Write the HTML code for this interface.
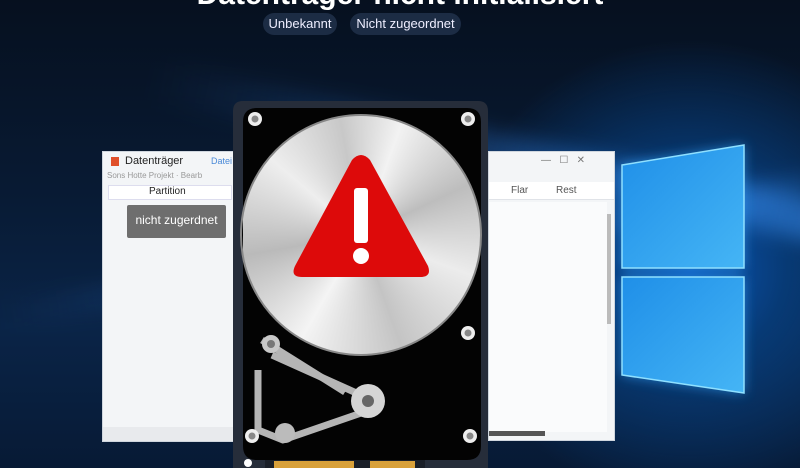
<!DOCTYPE html>
<html><head><meta charset="utf-8"><style>
*{margin:0;padding:0;box-sizing:border-box}
body{width:800px;height:468px;overflow:hidden;position:relative;font-family:"Liberation Sans",sans-serif;
background:radial-gradient(ellipse 240px 230px at 690px 270px,#0b55b5 0%,#073a75 40%,rgba(5,20,45,0) 100%),
linear-gradient(180deg,#06101f 0%,#081a33 40%,#0a2447 70%,#071a35 100%);}
.beam{position:absolute;transform-origin:left center}
.title{position:absolute;left:0;width:800px;top:-22px;text-align:center;color:#fff;font-weight:bold;font-size:30px}
.pill{position:absolute;top:13px;height:22px;border-radius:11px;background:#1c2c44;color:#eef;font-size:13px;line-height:22px;text-align:center}
.win{position:absolute;background:#f3f5f7;border:1px solid #cfd6de}
</style></head><body>
<div class="beam" style="left:0;top:300px;width:820px;height:30px;background:linear-gradient(90deg,rgba(40,110,200,0),rgba(50,130,230,.35),rgba(60,150,255,.15));transform:rotate(-9deg);filter:blur(8px)"></div>
<div class="beam" style="left:150px;top:60px;width:700px;height:40px;background:linear-gradient(90deg,rgba(40,110,200,0),rgba(50,130,230,.3),rgba(60,150,255,.5));transform:rotate(12deg);filter:blur(10px)"></div>
<div class="title">Datenträger nicht initialisiert</div>
<div class="pill" style="left:263px;width:74px">Unbekannt</div>
<div class="pill" style="left:350px;width:111px">Nicht zugeordnet</div>

<svg style="position:absolute;left:0;top:0" width="800" height="468">
<defs><linearGradient id="wl" x1="0" x2="1" y1="0" y2="1"><stop offset="0" stop-color="#1f8fe8"/><stop offset="1" stop-color="#45b5f5"/></linearGradient>
<filter id="gl"><feGaussianBlur stdDeviation="6"/></filter></defs>
<g filter="url(#gl)" opacity=".7"><polygon points="622,165 744,145 744,268 622,268" fill="#2a9af0"/><polygon points="622,277 744,277 744,393 622,375" fill="#2a9af0"/></g>
<polygon points="622,165 744,145 744,268 622,268" fill="url(#wl)" stroke="#8fe0ff" stroke-width="1.5"/>
<polygon points="622,277 744,277 744,393 622,375" fill="url(#wl)" stroke="#8fe0ff" stroke-width="1.5"/>
</svg>

<div class="win" style="left:102px;top:151px;width:132px;height:291px">
 <div style="position:absolute;left:8px;top:5px;width:8px;height:9px;background:#e0502a"></div>
 <div style="position:absolute;left:22px;top:3px;font-size:11px;color:#222">Datenträger</div>
 <div style="position:absolute;left:108px;top:4px;font-size:9px;color:#4a8ad8">Datei</div>
 <div style="position:absolute;left:4px;top:19px;font-size:8px;color:#999">Sons Hotte Projekt · Bearb</div>
 <div style="position:absolute;left:5px;top:33px;width:124px;height:15px;background:#fff;border:1px solid #dde"></div>
 <div style="position:absolute;left:46px;top:34px;font-size:10px;color:#222">Partition</div>
 <div style="position:absolute;left:24px;top:53px;width:99px;height:33px;background:#6e6e6e;border-radius:2px;color:#fff;font-size:12px;line-height:30px;text-align:center">nicht zugerdnet</div>
 <div style="position:absolute;left:0;bottom:0;width:100%;height:14px;background:#e8eaed"></div>
</div>
<div class="win" style="left:488px;top:151px;width:127px;height:290px">
 <div style="position:absolute;left:52px;top:3px;font-size:10px;color:#777">—&nbsp;&nbsp;&nbsp;☐&nbsp;&nbsp;&nbsp;✕</div>
 <div style="position:absolute;left:0;top:30px;width:100%;height:18px;background:#fff;border-bottom:1px solid #e0e3e8"></div>
 <div style="position:absolute;left:22px;top:33px;font-size:10px;color:#555">Flar&nbsp;&nbsp;&nbsp;&nbsp;&nbsp;&nbsp;&nbsp;&nbsp;&nbsp;&nbsp;Rest</div>
 <div style="position:absolute;left:0;top:50px;width:118px;height:230px;background:#fafbfc"></div>
 <div style="position:absolute;left:118px;top:62px;width:4px;height:110px;background:#bbb"></div>
 <div style="position:absolute;left:0;bottom:4px;width:56px;height:5px;background:#555"></div>
</div>

<div style="position:absolute;left:241px;top:115px;width:240px;height:240px;border-radius:50%;background:conic-gradient(from 20deg,#f2f2f2,#bdbdbd 45deg,#ececec 90deg,#c4c4c4 140deg,#f4f4f4 190deg,#bababa 240deg,#eeeeee 290deg,#c8c8c8 330deg,#f2f2f2);"></div>
<svg style="position:absolute;left:0;top:0" width="800" height="468">
<path d="M233,111 Q233,101 243,101 L478,101 Q488,101 488,111 L488,468 L233,468 Z M361,115 A120,120 0 1,0 361.01,115 Z" fill="#262d3a" fill-rule="evenodd"/>
<path d="M257,108 L467,108 Q481,108 481,122 L481,446 Q481,460 467,460 L257,460 Q243,460 243,446 L243,122 Q243,108 257,108 Z M361,115 A120,120 0 1,0 361.01,115 Z" fill="#030303" fill-rule="evenodd"/>
<circle cx="361" cy="235" r="120" fill="none" stroke="#888" stroke-width="2"/>
<g fill="none" stroke="#b5b5b5" stroke-width="7" stroke-linejoin="round">
<path d="M262,340 L345,392"/><path d="M272,355 L372,400"/>
<path d="M258,370 L258,430 L283,440 L370,410"/>
</g>
<circle cx="271" cy="344" r="9" fill="#c8c8c8"/><circle cx="271" cy="344" r="4" fill="#777"/>
<circle cx="368" cy="401" r="17" fill="#d5d5d5"/><circle cx="368" cy="401" r="6" fill="#666"/>
<circle cx="285" cy="433" r="10" fill="#bbb"/>
<g fill="#eee"><circle cx="255" cy="119" r="7"/><circle cx="468" cy="119" r="7"/><circle cx="468" cy="333" r="7"/><circle cx="252" cy="436" r="7"/><circle cx="470" cy="436" r="7"/></g>
<g fill="#888"><circle cx="255" cy="119" r="3.5"/><circle cx="468" cy="119" r="3.5"/><circle cx="468" cy="333" r="3.5"/><circle cx="252" cy="436" r="3.5"/><circle cx="470" cy="436" r="3.5"/></g>
<path d="M352,160 Q361,150 370,160 L428,266 Q432,277 420,277 L302,277 Q290,277 295,266 Z" fill="#dd0a0a"/>
<rect x="354" y="188" width="14" height="55" rx="3" fill="#fff"/>
<circle cx="361" cy="256" r="8" fill="#fff"/>
<rect x="265" y="460" width="160" height="8" fill="#1a1f28"/>
<rect x="274" y="461" width="80" height="7" fill="#d9a13a"/><rect x="370" y="461" width="45" height="7" fill="#d9a13a"/>
<circle cx="248" cy="463" r="4" fill="#fff"/>
</svg>
</body></html>
